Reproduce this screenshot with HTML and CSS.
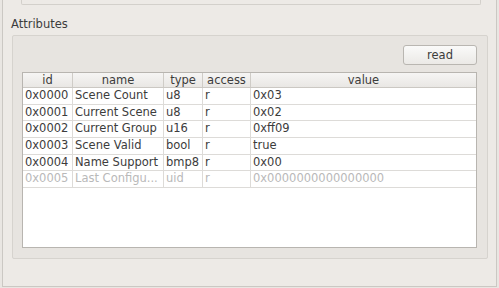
FILE: index.html
```html
<!DOCTYPE html>
<html lang="en">
<head>
    <meta charset="UTF-8">
    <title>Cluster Attributes</title>
    <link rel="stylesheet" href="styles.css">
</head>
<body>

    <div class="window">
        <!-- Tail of the panel above -->
        <div class="top-box"></div>

        <div class="group-title">Attributes</div>

        <div class="group">
            <div class="toolbar">
                <button class="read-btn">read</button>
            </div>

            <div class="view">
                <div class="row head">
                    <div class="cell">id</div>
                    <div class="cell">name</div>
                    <div class="cell">type</div>
                    <div class="cell">access</div>
                    <div class="cell">value</div>
                </div>
                <div class="row">
                    <div class="cell">0x0000</div>
                    <div class="cell">Scene Count</div>
                    <div class="cell">u8</div>
                    <div class="cell">r</div>
                    <div class="cell">0x03</div>
                </div>
                <div class="row">
                    <div class="cell">0x0001</div>
                    <div class="cell">Current Scene</div>
                    <div class="cell">u8</div>
                    <div class="cell">r</div>
                    <div class="cell">0x02</div>
                </div>
                <div class="row">
                    <div class="cell">0x0002</div>
                    <div class="cell">Current Group</div>
                    <div class="cell">u16</div>
                    <div class="cell">r</div>
                    <div class="cell">0xff09</div>
                </div>
                <div class="row">
                    <div class="cell">0x0003</div>
                    <div class="cell">Scene Valid</div>
                    <div class="cell">bool</div>
                    <div class="cell">r</div>
                    <div class="cell">true</div>
                </div>
                <div class="row">
                    <div class="cell">0x0004</div>
                    <div class="cell">Name Support</div>
                    <div class="cell">bmp8</div>
                    <div class="cell">r</div>
                    <div class="cell">0x00</div>
                </div>
                <div class="row disabled">
                    <div class="cell">0x0005</div>
                    <div class="cell">Last Configu...</div>
                    <div class="cell">uid</div>
                    <div class="cell">r</div>
                    <div class="cell">0x0000000000000000</div>
                </div>
            </div>
        </div>
    </div>

</body>
</html>
```

FILE: styles.css
```css
/* Base */
html, body {
    margin: 0;
    padding: 0;
    background-color: #e9e6e2;
    font-family: "DejaVu Sans", sans-serif;
    font-size: 11.5px;
    color: #3c3c3c;
}

* {
    box-sizing: border-box;
}

/* Outer window frame */
.window {
    margin-left: 2px;
    width: 495px;
    height: 287px;
    background-color: #edeae6;
    border: 1px solid #cbc8c3;
    border-top: none;
    overflow: hidden;
}

/* Bottom of the previous group box */
.top-box {
    margin-left: 18px;
    width: 460px;
    height: 5px;
    border: 1px solid #d3d0cb;
    border-top: none;
    border-radius: 0 0 2px 2px;
}

.group-title {
    padding-left: 8px;
    margin-top: 12px;
    height: 18px;
    line-height: 15px;
}

/* Attributes group box */
.group {
    margin-left: 9px;
    width: 476px;
    height: 224px;
    background-color: #e7e4e0;
    border: 1px solid #d6d3ce;
    border-radius: 2px;
    padding: 9px 10px 0 9px;
}

.toolbar {
    display: flex;
    justify-content: flex-end;
    height: 27px;
}

.read-btn {
    width: 74px;
    height: 20px;
    padding: 0;
    font-family: inherit;
    font-size: 11.5px;
    color: #3c3c3c;
    background: linear-gradient(#fafaf9, #ebe9e6);
    border: 1px solid #b9b6b1;
    border-radius: 3px;
}

/* Table view */
.view {
    width: 455px;
    height: 176px;
    background-color: #fff;
    border: 1px solid #b8b5b0;
}

.row {
    display: grid;
    grid-template-columns: 50px 91px 39px 48px 1fr;
    height: 16.7px;
    border-bottom: 1px solid #dddbd8;
}

.row .cell {
    padding-left: 2px;
    border-right: 1px solid #dddbd8;
    white-space: nowrap;
    overflow: hidden;
    line-height: 15.7px;
}

.row .cell:last-child {
    border-right: none;
}

.row.head {
    height: 15px;
    background: linear-gradient(#f6f5f4, #e9e7e4);
    border-bottom: 1px solid #cbc8c3;
}

.row.head .cell {
    padding-left: 0;
    text-align: center;
    line-height: 14px;
    border-right-color: #cfccc7;
}

.row.disabled {
    color: #b9b9b9;
}
```
